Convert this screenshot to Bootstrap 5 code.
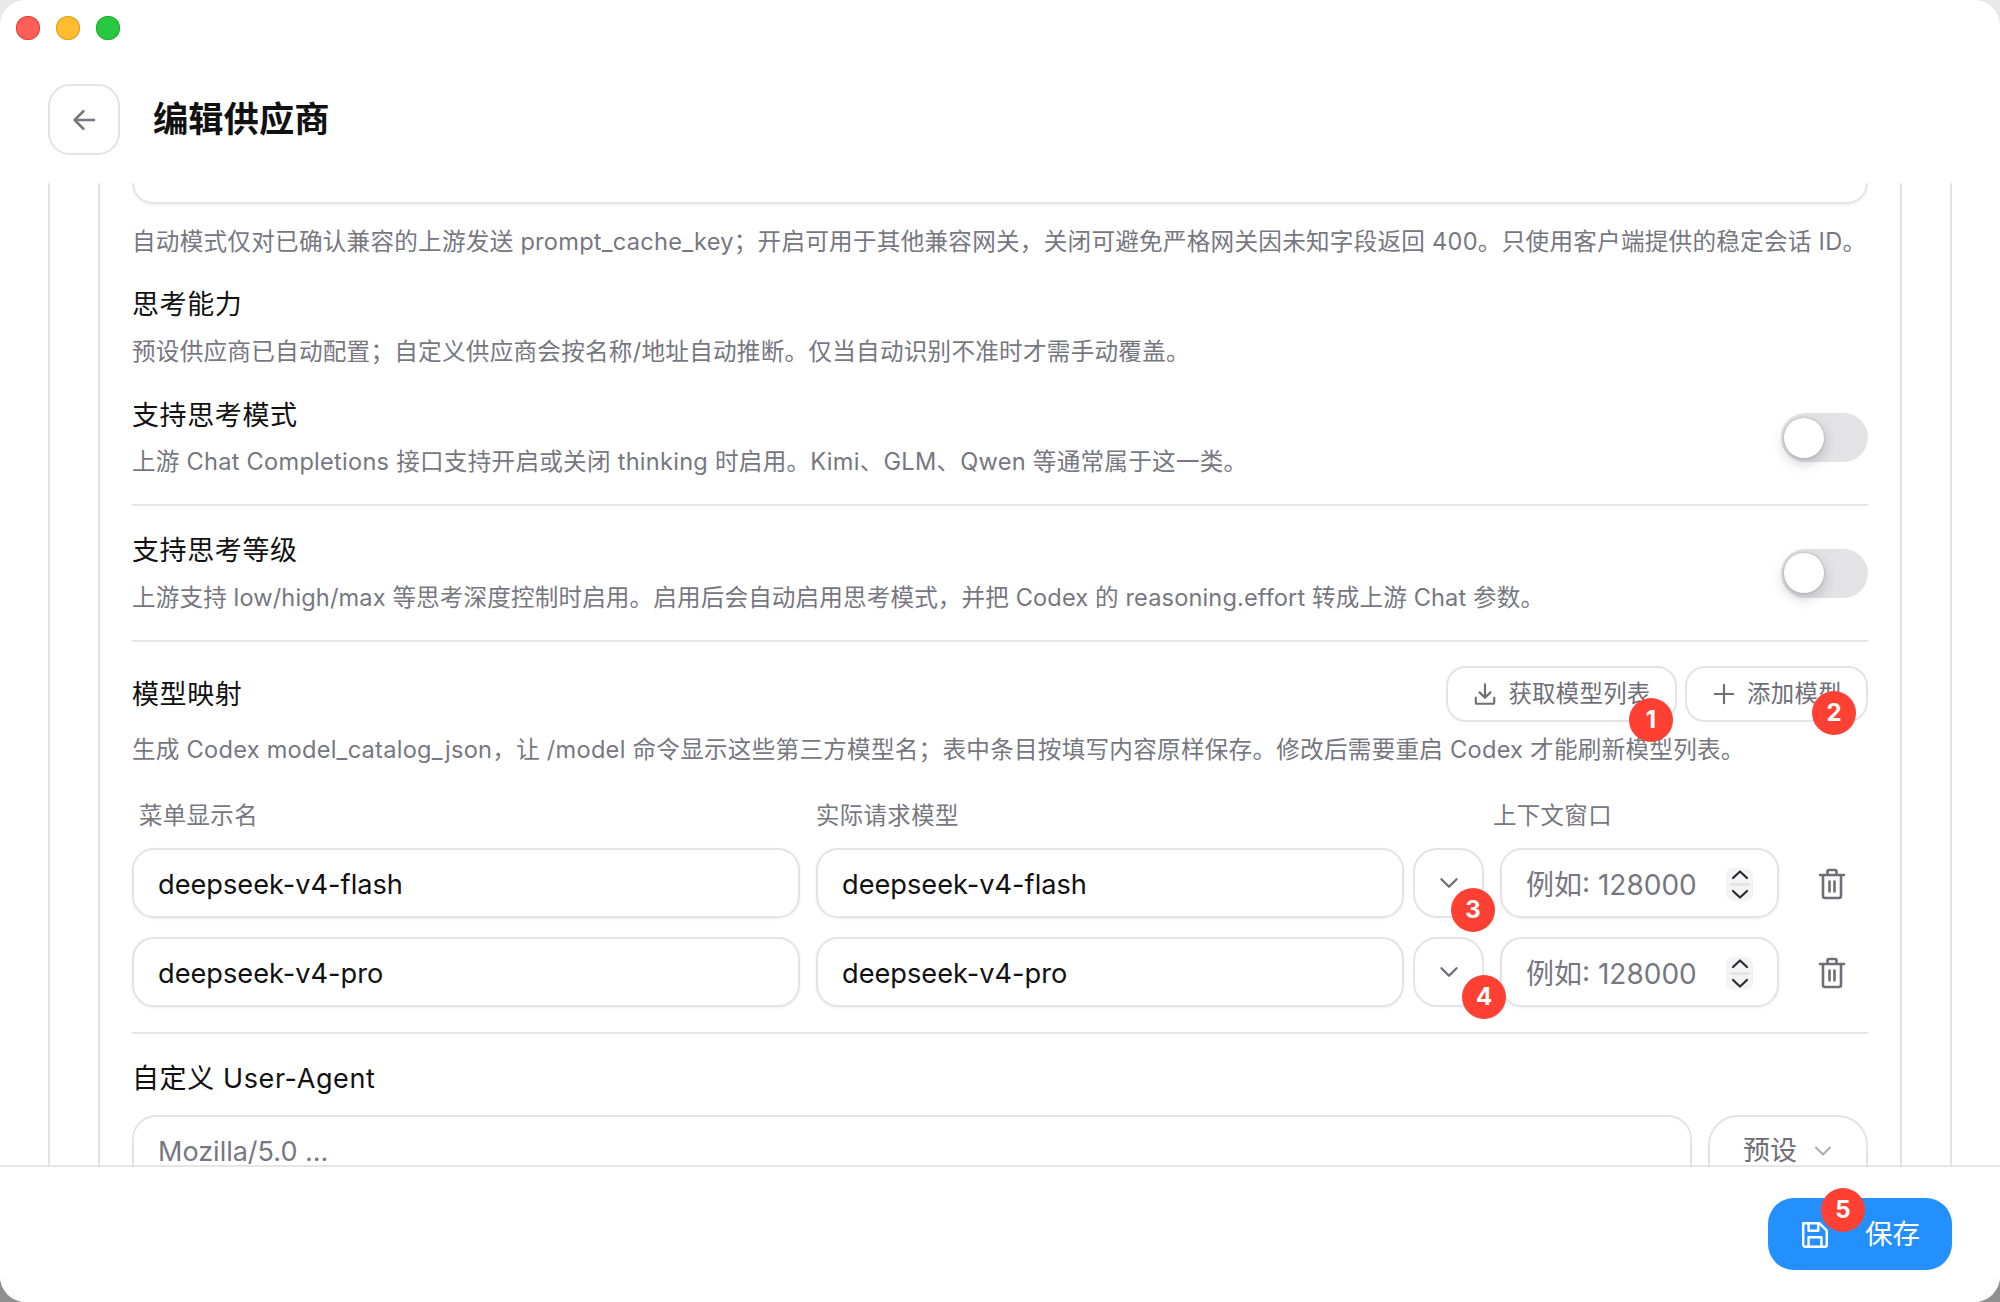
<!DOCTYPE html>
<html lang="zh-CN">
<head>
<meta charset="utf-8">
<title>编辑供应商</title>
<link href="https://cdn.jsdelivr.net/npm/bootstrap@5.3.0/dist/css/bootstrap.min.css" rel="stylesheet">
<style>
html,body{height:100%;margin:0;}
body{background:linear-gradient(#e9e9e9 0 50%,#8f8f8f 50%);font-family:Inter,"Noto Sans CJK SC",sans-serif;}
.win{width:2000px;height:1302px;background:#fff;border-radius:26px;overflow:hidden;position:relative;}
.lights{height:56px;padding-left:16px;gap:16px;flex:none;}
.dot{width:24px;height:24px;border-radius:50%;}
.d-r{background:#ff5f57;box-shadow:inset 0 0 0 1px #e0443e;}
.d-y{background:#febc2e;box-shadow:inset 0 0 0 1px #dfa023;}
.d-g{background:#28c840;box-shadow:inset 0 0 0 1px #1fad2f;}
.head{height:127px;padding:28px 0 28px 48px;gap:33px;flex:none;}
.back{width:72px;height:71px;border:2px solid #e4e4e6;border-radius:22px;background:#fff;padding:0;color:#77777f;}
.title{font-size:35.3px;font-weight:600;color:#111;line-height:1;margin:0;}
.outer{margin:0 48px;padding:0 48px;border-left:2px solid #e4e4e6;border-right:2px solid #e4e4e6;overflow:hidden;min-height:0;}
.inner{height:100%;padding:0 32px;border-left:2px solid #e4e4e6;border-right:2px solid #e4e4e6;overflow:hidden;}
.stub{height:21px;border:2px solid #e4e4e6;border-top:0;border-radius:0 0 22px 22px;box-shadow:0 2px 3px rgba(0,0,0,.05);}
.desc{font-size:23.6px;line-height:34px;color:#77777f;letter-spacing:.25px;white-space:nowrap;margin:0;}
.desc.tight{letter-spacing:.12px;}
.lab{font-size:27px;line-height:38px;height:38px;padding-top:1px;color:#111;margin:0;letter-spacing:.6px;white-space:nowrap;}
.sw{width:87px;height:49px;border-radius:25px;background:#e3e3e6;padding-left:3px;flex:none;}
.sw i{display:block;width:40px;height:40px;border-radius:50%;background:#fff;box-shadow:0 0 3px rgba(0,0,0,.2),0 5px 14px rgba(0,0,0,.2);}
.rule{height:2px;background:#e6e6e8;}
.act{height:56px;border:2px solid #e4e4e6;border-radius:20px;background:#fff;color:#6e6e76;font-size:23.4px;gap:10px;padding:0;letter-spacing:.3px;}
.hint{font-size:23.4px;line-height:34px;color:#77777f;letter-spacing:.4px;}
.mapgrid{display:grid;grid-template-columns:668px 668px 279px 1fr;gap:19px 16px;}
.fld{height:70px;border:2px solid #e4e4e6;border-radius:22px;background:#fff;box-shadow:0 1px 3px rgba(0,0,0,.07);font-size:27.2px;color:#111;padding:2px 24px 0;}
.fld:focus{border-color:#e4e4e6;box-shadow:0 1px 3px rgba(0,0,0,.07);}
.chev{width:71px;height:70px;flex:none;border:2px solid #e4e4e6;border-radius:24px;background:#fff;color:#6e6e76;padding:0;}
.ctx{height:70px;border:2px solid #e4e4e6;border-radius:22px;background:#fff;box-shadow:0 1px 3px rgba(0,0,0,.07);padding:2px 24px 0;color:#77777f;font-size:28px;}
.ctx input{border:0;outline:0;min-width:0;width:100%;padding:2px 0 0;font-size:28px;background:transparent;}
.ctx input::placeholder{color:#77777f;opacity:1;}
.spin{width:27px;height:33px;flex:none;border-radius:7px;background:#f3f3f4;}
.trash{color:#6e6e76;background:none;border:0;padding:2px 0 0;}
.last{height:80px;border:2px solid #e4e4e6;border-radius:24px 24px 0 0;border-bottom:0;padding:0 24px;font-size:27px;color:#77777f;}
.preset{width:160px;height:80px;flex:none;border:2px solid #e4e4e6;border-bottom:0;border-radius:30px 30px 0 0;background:#fff;color:#6e6e76;font-size:27px;gap:16px;padding:0 0 10px;}
.foot{height:137px;border-top:2px solid #e6e6e8;padding:31px 48px 0 0;background:#fff;flex:none;}
.save{width:184px;height:72px;border-radius:26px;background:#2490ff;border:0;color:#fff;font-size:27.5px;gap:35px;padding:2px 0 0;}
.save:hover{background:#2490ff;}
.mk{position:absolute;width:44px;height:44px;border-radius:50%;background:#ff4032;color:#fff;font-size:24px;font-weight:700;line-height:44px;text-align:center;font-family:Inter,sans-serif;}
.m11{margin-top:11px}.m12{margin-top:12px}.m15{margin-top:15px}.m18{margin-top:18px}.m21{margin-top:21px}.m24{margin-top:24px}.m25{margin-top:25px}.m26{margin-top:26px}.m27{margin-top:27px}.m32{margin-top:32px}
.gap9{gap:9px}.gap16{gap:16px}.w230{width:231px}.w182{width:183px;margin-left:8px}
.c1{width:684px;padding-left:7px}.c2{width:677px}
.ph{margin-top:16px;line-height:38px}
.m1{left:1629px;top:698px}.m2{left:1812px;top:691px}.m3{left:1451px;top:888px}.m4{left:1462px;top:975px}.m5{left:1821px;top:1188px}
</style>
</head>
<body>
<div class="win d-flex flex-column">
  <div class="lights d-flex align-items-center">
    <span class="dot d-r"></span><span class="dot d-y"></span><span class="dot d-g"></span>
  </div>
  <div class="head d-flex align-items-center">
    <button class="back btn d-flex align-items-center justify-content-center" aria-label="back">
      <svg width="30" height="30" viewBox="0 0 24 24" fill="none" stroke="currentColor" stroke-width="2.1" stroke-linecap="round" stroke-linejoin="round"><path d="M20 12H4.500M11.500 5l-7 7 7 7"/></svg>
    </button>
    <h1 class="title">编辑供应商</h1>
  </div>
  <div class="outer flex-grow-1">
    <div class="inner">
      <div class="stub"></div>
      <p class="desc m21">自动模式仅对已确认兼容的上游发送 prompt_cache_key；开启可用于其他兼容网关，关闭可避免严格网关因未知字段返回 400。只使用客户端提供的稳定会话 ID。</p>
      <p class="lab m26">思考能力</p>
      <p class="desc m12">预设供应商已自动配置；自定义供应商会按名称/地址自动推断。仅当自动识别不准时才需手动覆盖。</p>
      <div class="d-flex justify-content-between align-items-center m27">
        <div>
          <p class="lab">支持思考模式</p>
          <p class="desc m11">上游 Chat Completions 接口支持开启或关闭 thinking 时启用。Kimi、GLM、Qwen 等通常属于这一类。</p>
        </div>
        <div class="sw d-flex align-items-center"><i></i></div>
      </div>
      <div class="rule m25"></div>
      <div class="d-flex justify-content-between align-items-center m25">
        <div>
          <p class="lab">支持思考等级</p>
          <p class="desc tight m12">上游支持 low/high/max 等思考深度控制时启用。启用后会自动启用思考模式，并把 Codex 的 reasoning.effort 转成上游 Chat 参数。</p>
        </div>
        <div class="sw d-flex align-items-center"><i></i></div>
      </div>
      <div class="rule m25"></div>
      <div class="d-flex align-items-center m24">
        <p class="lab me-auto">模型映射</p>
        <button class="act btn d-flex align-items-center justify-content-center w230">
          <svg width="26" height="26" viewBox="0 0 24 24" fill="none" stroke="currentColor" stroke-width="2" stroke-linecap="round" stroke-linejoin="round"><path d="M12 3v12M7 10.500l5 5 5-5M3.500 15.500V20a1 1 0 0 0 1 1h15a1 1 0 0 0 1-1v-4.500"/></svg>
          <span>获取模型列表</span>
        </button>
        <button class="act btn d-flex align-items-center justify-content-center w182">
          <svg width="26" height="26" viewBox="0 0 24 24" fill="none" stroke="currentColor" stroke-width="2" stroke-linecap="round"><path d="M12 3.500v17M3.500 12h17"/></svg>
          <span>添加模型</span>
        </button>
      </div>
      <p class="desc m11">生成 Codex model_catalog_json，让 /model 命令显示这些第三方模型名；表中条目按填写内容原样保存。修改后需要重启 Codex 才能刷新模型列表。</p>
      <div class="d-flex hint m32">
        <span class="c1">菜单显示名</span><span class="c2">实际请求模型</span><span>上下文窗口</span>
      </div>
      <div class="mapgrid m15">
        <input class="form-control fld" value="deepseek-v4-flash" aria-label="菜单显示名">
        <div class="d-flex gap9"><input class="form-control fld" value="deepseek-v4-flash" aria-label="实际请求模型"><button class="chev btn d-flex align-items-center justify-content-center" aria-label="expand"><svg width="26" height="26" viewBox="0 0 24 24" fill="none" stroke="currentColor" stroke-width="2.100" stroke-linecap="round" stroke-linejoin="round"><path d="M5 8.500l7 7 7-7"/></svg></button></div>
        <div class="ctx d-flex align-items-center"><input placeholder="例如: 128000" aria-label="上下文窗口"><span class="spin d-flex align-items-center justify-content-center"><svg width="20" height="33" viewBox="0 0 20 33" fill="none" stroke="#2a2a2e" stroke-width="2.200" stroke-linecap="round" stroke-linejoin="round"><path d="M3 10l7-6.500 7 6.500M3 23l7 6.500 7-6.500"/><path d="M1 16.500h18" stroke="#dedee0"/></svg></span></div>
        <div class="d-flex align-items-center justify-content-center"><button class="trash" aria-label="delete"><svg width="28" height="32" viewBox="0 0 28 32" fill="none" stroke="currentColor" stroke-width="2.600" stroke-linecap="round" stroke-linejoin="round"><path d="M2 7h24M9.500 7V3.500A1.500 1.500 0 0 1 11 2h6a1.500 1.500 0 0 1 1.500 1.500V7M5 7v21a2 2 0 0 0 2 2h14a2 2 0 0 0 2-2V7M11.500 13.500v10M16.500 13.500v10"/></svg></button></div>

        <input class="form-control fld" value="deepseek-v4-pro" aria-label="菜单显示名">
        <div class="d-flex gap9"><input class="form-control fld" value="deepseek-v4-pro" aria-label="实际请求模型"><button class="chev btn d-flex align-items-center justify-content-center" aria-label="expand"><svg width="26" height="26" viewBox="0 0 24 24" fill="none" stroke="currentColor" stroke-width="2.100" stroke-linecap="round" stroke-linejoin="round"><path d="M5 8.500l7 7 7-7"/></svg></button></div>
        <div class="ctx d-flex align-items-center"><input placeholder="例如: 128000" aria-label="上下文窗口"><span class="spin d-flex align-items-center justify-content-center"><svg width="20" height="33" viewBox="0 0 20 33" fill="none" stroke="#2a2a2e" stroke-width="2.200" stroke-linecap="round" stroke-linejoin="round"><path d="M3 10l7-6.500 7 6.500M3 23l7 6.500 7-6.500"/><path d="M1 16.500h18" stroke="#dedee0"/></svg></span></div>
        <div class="d-flex align-items-center justify-content-center"><button class="trash" aria-label="delete"><svg width="28" height="32" viewBox="0 0 28 32" fill="none" stroke="currentColor" stroke-width="2.600" stroke-linecap="round" stroke-linejoin="round"><path d="M2 7h24M9.500 7V3.500A1.500 1.500 0 0 1 11 2h6a1.500 1.500 0 0 1 1.500 1.500V7M5 7v21a2 2 0 0 0 2 2h14a2 2 0 0 0 2-2V7M11.500 13.500v10M16.500 13.500v10"/></svg></button></div>
      </div>
      <div class="rule m25"></div>
      <p class="lab m25">自定义 User-Agent</p>
      <div class="d-flex m18 gap16">
        <div class="last flex-grow-1 d-flex align-items-start"><span class="ph">Mozilla/5.0 ...</span></div>
        <button class="preset btn d-flex align-items-center justify-content-center">
          <span>预设</span>
          <svg width="20" height="20" viewBox="0 0 20 20" fill="none" stroke="#a9a9ae" stroke-width="2" stroke-linecap="round" stroke-linejoin="round"><path d="M3 6.500l7 7 7-7"/></svg>
        </button>
      </div>
    </div>
  </div>
  <div class="foot d-flex justify-content-end align-items-start">
    <button class="save btn d-flex align-items-center justify-content-center">
      <svg width="30" height="30" viewBox="0 0 28 28" fill="none" stroke="#fff" stroke-width="2.300" stroke-linejoin="round"><path d="M3 3h15l7 7v13a2 2 0 0 1-2 2H5a2 2 0 0 1-2-2z"/><path d="M8 3v7h9V3M8 25v-9h12v9"/></svg>
      <span>保存</span>
    </button>
  </div>
  <span class="mk m1">1</span><span class="mk m2">2</span><span class="mk m3">3</span><span class="mk m4">4</span><span class="mk m5">5</span>
</div>
<script src="https://cdn.jsdelivr.net/npm/bootstrap@5.3.0/dist/js/bootstrap.bundle.min.js"></script>
</body>
</html>
